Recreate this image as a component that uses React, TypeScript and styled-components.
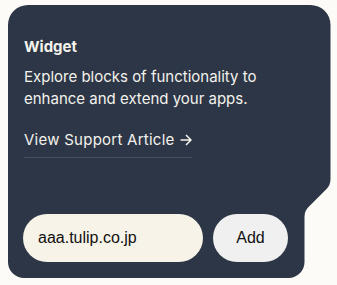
import React from "react";
import styled, { createGlobalStyle } from "styled-components";

const Global = createGlobalStyle`
  html, body { margin: 0; padding: 0; background: #fcfbf7; }
  body { font-family: Inter, "Noto Sans", sans-serif; }
  * { box-sizing: border-box; }
`;

const Page = styled.div`
  padding: 5px 0 0 8px;
`;

const Card = styled.section`
  width: 323px;
  height: 273px;
  background: #2c3646;
  clip-path: path("M 20 0 H 302.5 A 20 20 0 0 1 322.5 20 V 174 Q 322.5 180 318.5 184 L 300.5 202 Q 296.5 206 296.5 212 V 257 A 16 16 0 0 1 280.5 273 H 16 A 16 16 0 0 1 0 257 V 20 A 20 20 0 0 1 20 0 Z");
  display: flex;
  flex-direction: column;
  padding: 32px 16px 16px 15px;
  color: #f4f2ec;
`;

const Body = styled.div`
  padding-left: 1px;
  display: flex;
  flex-direction: column;
  align-items: flex-start;
`;

const Title = styled.h3`
  margin: 0;
  font-size: 15px;
  line-height: 20px;
  font-weight: 700;
`;

const Description = styled.p`
  margin: 9px 0 0;
  font-size: 15px;
  line-height: 22px;
  font-weight: 400;
  width: 270px;
`;

const Link = styled.a`
  margin-top: 19px;
  font-size: 15px;
  line-height: 22px;
  letter-spacing: 0.25px;
  color: inherit;
  text-decoration: none;
  padding-bottom: 6px;
  border-bottom: 1px solid #475061;
  display: inline-flex;
  align-items: center;
  gap: 5px;
`;

const Form = styled.form`
  margin-top: auto;
  display: flex;
  gap: 10px;
`;

const Input = styled.input`
  width: 180px;
  height: 48px;
  border: none;
  outline: none;
  border-radius: 24px;
  background: #f7f3e8;
  padding: 0 15px;
  font-family: "Liberation Sans", Arial, sans-serif;
  font-size: 16px;
  color: #111;
`;

const Button = styled.button`
  width: 75px;
  height: 48px;
  border: none;
  border-radius: 24px;
  background: #f0f0f0;
  font-family: "Liberation Sans", Arial, sans-serif;
  font-size: 16px;
  color: #111;
  padding: 0;
`;

const Arrow = () => (
  <svg width="12" height="12" viewBox="0 0 12 12" fill="none" stroke="currentColor" strokeWidth="1.5">
    <path d="M0.5 6 H11 M6 1 L11 6 L6 11" />
  </svg>
);

export default function App() {
  return (
    <>
      <Global />
      <Page>
        <Card>
          <Body>
            <Title>Widget</Title>
            <Description>Explore blocks of functionality to enhance and extend your apps.</Description>
            <Link href="#">
              <span>View Support Article</span>
              <Arrow />
            </Link>
          </Body>
          <Form onSubmit={(e) => e.preventDefault()}>
            <Input defaultValue="aaa.tulip.co.jp" />
            <Button type="submit">Add</Button>
          </Form>
        </Card>
      </Page>
    </>
  );
}
